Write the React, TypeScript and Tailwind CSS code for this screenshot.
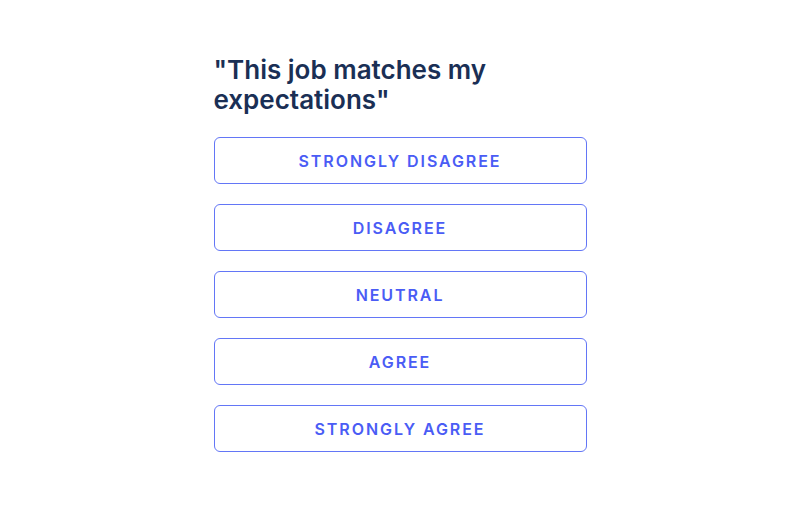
import React from "react";

const options = ["Strongly Disagree", "Disagree", "Neutral", "Agree", "Strongly Agree"];

export default function App() {
  return (
    <div className="min-h-[505px] w-full bg-white" style={{ fontFamily: "Inter, 'Noto Sans', sans-serif" }}>
      <div className="mx-auto w-[373px] pt-[55px]">
        <h2 className="pr-[60px] text-[26px] font-semibold leading-[30px] text-[#1a2f55]">
          "This job matches my expectations"
        </h2>
        <div className="mt-[22px] flex flex-col gap-[20px]">
          {options.map((o) => (
            <button
              key={o}
              className="flex h-[47px] w-full items-center justify-center rounded-[6px] border-[1.5px] border-[#6376f6] bg-white text-[16px] font-semibold uppercase tracking-[0.12em] text-[#4a5cf5]"
            >
              {o}
            </button>
          ))}
        </div>
      </div>
    </div>
  );
}
